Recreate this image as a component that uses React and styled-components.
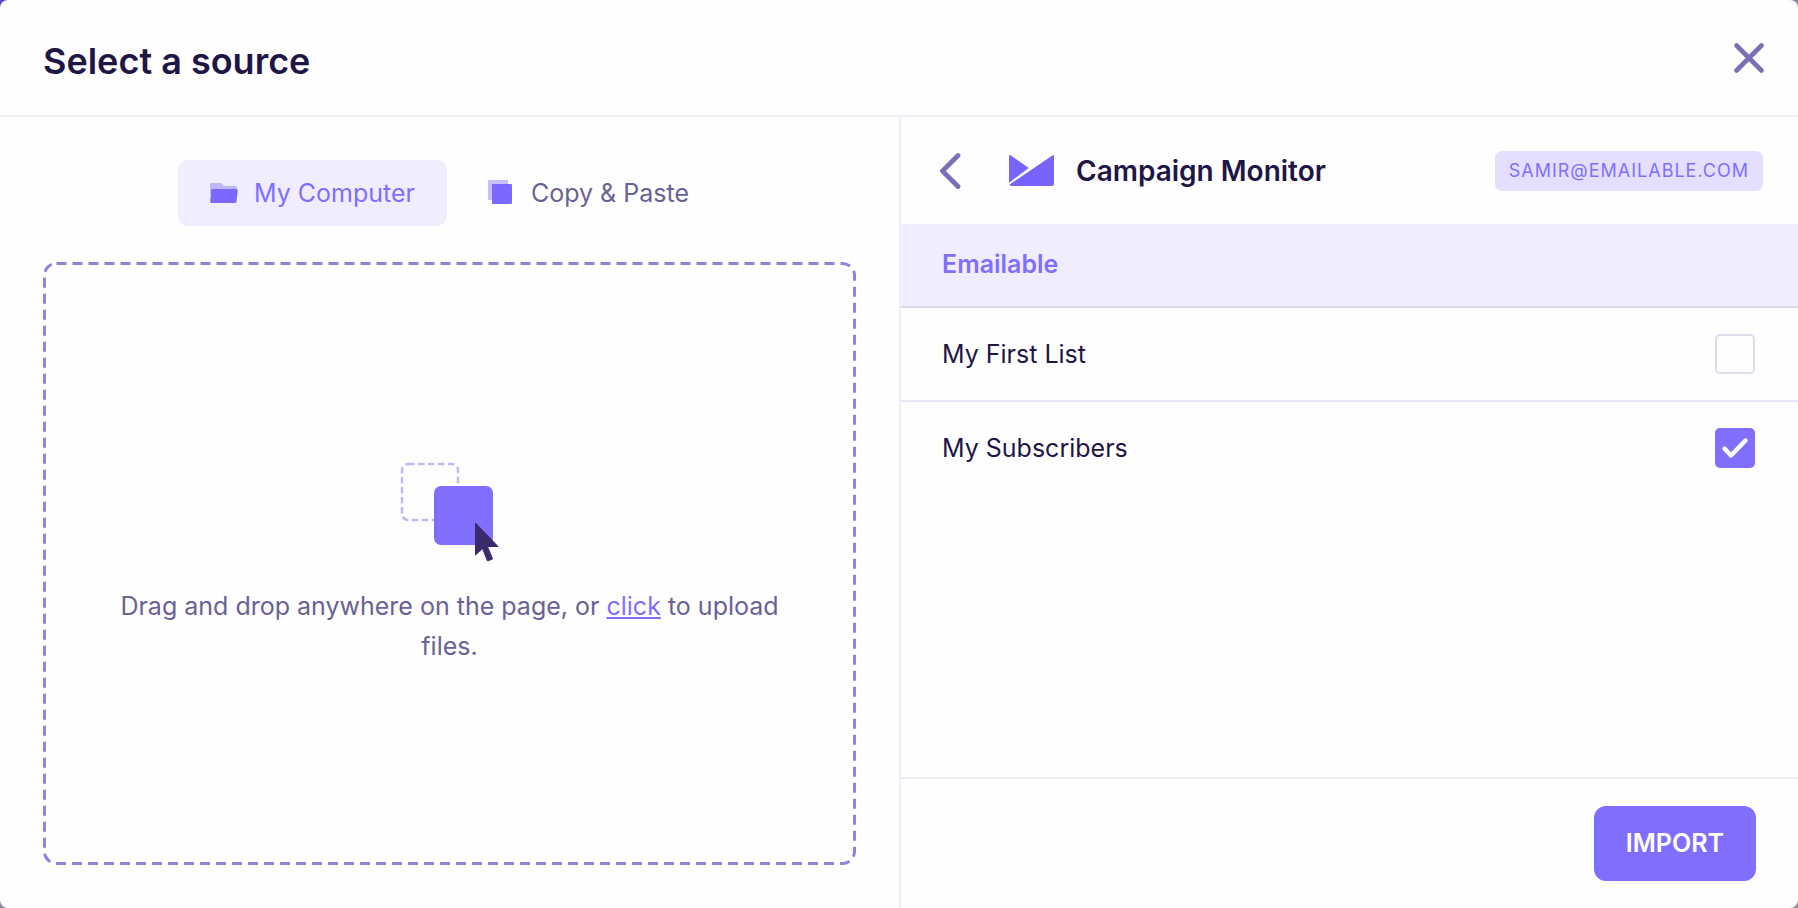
import React, { useState } from "react";
import { createGlobalStyle, styled } from "styled-components";

const GlobalStyle = createGlobalStyle`
  * {
    box-sizing: border-box;
  }
  body {
    margin: 0;
    background: linear-gradient(135deg, #5b45c8 0, #8e8c9c 200px);
    font-family: Inter, "Liberation Sans", sans-serif;
    font-size: 25px;
    color: #1f1646;
  }
  button {
    font: inherit;
    border: none;
    background: none;
    padding: 0;
    cursor: pointer;
  }
`;

const Modal = styled.div`
  display: flex;
  flex-direction: column;
  min-height: 100vh;
  background: #fefefe;
  border-radius: 8px;
`;

const ModalHeader = styled.header`
  display: flex;
  justify-content: space-between;
  align-items: flex-start;
  padding: 37px 28px 30px 43px;
  border-bottom: 2px solid #efedf6;
`;

const Title = styled.h1`
  margin: 0;
  font-size: 36px;
  line-height: 48px;
  font-weight: 600;
`;

const IconButton = styled.button`
  display: flex;
  color: #7d6fb5;
`;

const Body = styled.main`
  flex: 1;
  display: grid;
  grid-template-columns: 1fr 1fr;
`;

const UploadPanel = styled.section`
  display: flex;
  flex-direction: column;
  gap: 36px;
  padding: 43px;
`;

const TabList = styled.div`
  display: flex;
  justify-content: center;
  gap: 8px;
`;

const Tab = styled.button`
  display: flex;
  align-items: center;
  gap: 16px;
  padding: 0 32px;
  line-height: 66px;
  border-radius: 10px;
  color: ${(props) => (props.$active ? "#806fff" : "#6b6196")};
  background: ${(props) => (props.$active ? "#f0edfe" : "transparent")};
`;

const DropZone = styled.div`
  position: relative;
  flex: 1;
  display: flex;
  flex-direction: column;
  justify-content: center;
  align-items: center;
  gap: 24px;
  padding: 0 64px;
`;

/* the native dashed border is too short, so the outline is drawn */
const Outline = styled.svg`
  position: absolute;
  inset: 0;
  width: 100%;
  height: 100%;
  pointer-events: none;
  rect {
    width: calc(100% - 3px);
    height: calc(100% - 3px);
  }
`;

const DropText = styled.p`
  margin: 0;
  line-height: 40px;
  text-align: center;
  color: #6b6196;
  a {
    color: #806fff;
  }
`;

const ListPanel = styled.section`
  display: flex;
  flex-direction: column;
  border-left: 2px solid #efedf8;
`;

const SourceHeader = styled.div`
  display: flex;
  align-items: center;
  padding: 32px 35px 32px 36px;
  height: 107px;
`;

const SourceName = styled.h2`
  flex: 1;
  display: flex;
  align-items: center;
  gap: 22px;
  margin: 0 0 0 48px;
  font-size: 28px;
  font-weight: 600;
`;

const Account = styled.span`
  padding: 0 14px;
  border-radius: 7px;
  background: #e5dfff;
  color: #806fff;
  font-size: 18px;
  line-height: 40px;
  letter-spacing: 1px;
  text-transform: uppercase;
`;

const GroupName = styled.h3`
  margin: 0;
  padding: 0 43px 2px 41px;
  font-size: 25px;
  line-height: 80px;
  font-weight: 600;
  color: #806fff;
  background: #f0edfe;
  border-bottom: 2px solid #dcd9ef;
`;

const Lists = styled.div`
  flex: 1;
`;

const ListRow = styled.label`
  display: flex;
  justify-content: space-between;
  align-items: center;
  padding: 0 43px 0 41px;
  line-height: 92px;
  cursor: pointer;
  & + & {
    border-top: 2px solid #e9e6f8;
  }
`;

const CheckWrap = styled.span`
  display: grid;
  width: 40px;
  height: 40px;
  & > * {
    grid-area: 1 / 1;
  }
  svg {
    pointer-events: none;
  }
`;

const CheckInput = styled.input`
  appearance: none;
  margin: 0;
  border: 2px solid #e0dcec;
  border-radius: 5px;
  &:checked {
    background: #806fff;
    border-color: #806fff;
  }
`;

const Footer = styled.footer`
  display: flex;
  justify-content: flex-end;
  padding: 27px 42px;
  border-top: 2px solid #efedf6;
`;

const ImportButton = styled.button`
  padding: 0 32px;
  border-radius: 12px;
  background: #806fff;
  color: #fff;
  font-weight: 600;
  line-height: 75px;
`;

const CloseIcon = () => (
  <svg width="42" height="42" viewBox="0 0 42 42" fill="none">
    <path
      d="M8.500 8.500l25 25M33.500 8.500l-25 25"
      stroke="currentColor"
      strokeWidth="4.600"
      strokeLinecap="round"
    />
  </svg>
);

const BackIcon = () => (
  <svg width="24" height="40" viewBox="0 0 24 40" fill="none">
    <path
      d="M21 4.500L5.500 20l15.500 15.500"
      stroke="currentColor"
      strokeWidth="4.800"
      strokeLinecap="round"
      strokeLinejoin="round"
    />
  </svg>
);

const FolderIcon = () => (
  <svg width="28" height="22" viewBox="0 0 28 22">
    <path
      d="M1 1h10l3 3h11.500q1.500 0 1.500 1.500V12H0V2q0-1 1-1z"
      fill="#beb5fd"
    />
    <path
      d="M2.500 7h24q1.500 0 1.300 1.500L26.500 19.500q-.2 1.500-1.500 1.500H1.500Q0 21 .2 19.500L1.200 8.500Q1.300 7 2.500 7z"
      fill="#7b68ff"
    />
  </svg>
);

const CopyIcon = () => (
  <svg width="28" height="28" viewBox="0 0 28 28">
    <rect x="1" y="1" width="20" height="20" rx="1" fill="#c8c0fd" />
    <rect x="5" y="5" width="20" height="20" rx="1" fill="#7b68ff" />
  </svg>
);

const CampaignMonitorLogo = () => (
  <svg width="45" height="31" viewBox="0 0 45 31" fill="#7863ff">
    <path d="M1.800.4L19.700 12.900.4 27.400Q0 27.600 0 27V1.200Q0-.6 1.800.4z" />
    <path d="M43.300.4Q45-.6 45 1.200V29q0 2-2 2H2Q.8 31 .6 29.600z" />
  </svg>
);

const DragIcon = () => (
  <svg width="100" height="100" viewBox="0 0 100 100">
    <rect
      x="2"
      y="2"
      width="56"
      height="56"
      rx="6"
      fill="none"
      stroke="#c3b9f7"
      strokeWidth="2.500"
      strokeDasharray="6.500 3.500"
    />
    <rect x="34" y="24" width="59" height="59" rx="7" fill="#806fff" />
    <path
      d="M75.500 61v32l7-6.500 5 12.500 5-2-5-12.500H98z"
      fill="#3a2a6b"
      stroke="#3a2a6b"
      strokeLinejoin="round"
    />
  </svg>
);

const TickIcon = () => (
  <svg width="40" height="40" viewBox="0 0 40 40" fill="none">
    <path
      d="M9.500 20.500l6.500 7L30.500 12.500"
      stroke="#fff"
      strokeWidth="4.400"
      strokeLinecap="round"
      strokeLinejoin="round"
    />
  </svg>
);

const tabs = [
  { label: "My Computer", Icon: FolderIcon },
  { label: "Copy & Paste", Icon: CopyIcon },
];

const App = () => {
  const [activeIndex, setActiveIndex] = useState(0);
  const [lists, setLists] = useState([
    { name: "My First List", checked: false },
    { name: "My Subscribers", checked: true },
  ]);

  const toggleList = (name) => {
    setLists(
      lists.map((list) =>
        list.name === name ? { ...list, checked: !list.checked } : list
      )
    );
  };

  return (
    <>
      <GlobalStyle />
      <Modal>
        <ModalHeader>
          <Title>Select a source</Title>
          <IconButton aria-label="Close">
            <CloseIcon />
          </IconButton>
        </ModalHeader>
        <Body>
          <UploadPanel>
            <TabList>
              {tabs.map(({ label, Icon }, i) => (
                <Tab
                  key={label}
                  $active={i === activeIndex}
                  onClick={() => setActiveIndex(i)}
                >
                  <Icon />
                  {label}
                </Tab>
              ))}
            </TabList>
            <DropZone>
              <Outline>
                <rect
                  x="1.500"
                  y="1.500"
                  rx="12"
                  fill="none"
                  stroke="#9184d8"
                  strokeWidth="3"
                  strokeDasharray="10 6"
                />
              </Outline>
              <DragIcon />
              <DropText>
                Drag and drop anywhere on the page, or <a href="#upload">click</a>{" "}
                to upload files.
              </DropText>
            </DropZone>
          </UploadPanel>
          <ListPanel>
            <SourceHeader>
              <IconButton aria-label="Back">
                <BackIcon />
              </IconButton>
              <SourceName>
                <CampaignMonitorLogo />
                Campaign Monitor
              </SourceName>
              <Account>samir@emailable.com</Account>
            </SourceHeader>
            <GroupName>Emailable</GroupName>
            <Lists>
              {lists.map((list) => (
                <ListRow key={list.name}>
                  {list.name}
                  <CheckWrap>
                    <CheckInput
                      type="checkbox"
                      checked={list.checked}
                      onChange={() => toggleList(list.name)}
                    />
                    {list.checked && <TickIcon />}
                  </CheckWrap>
                </ListRow>
              ))}
            </Lists>
            <Footer>
              <ImportButton>IMPORT</ImportButton>
            </Footer>
          </ListPanel>
        </Body>
      </Modal>
    </>
  );
};

export default App;
